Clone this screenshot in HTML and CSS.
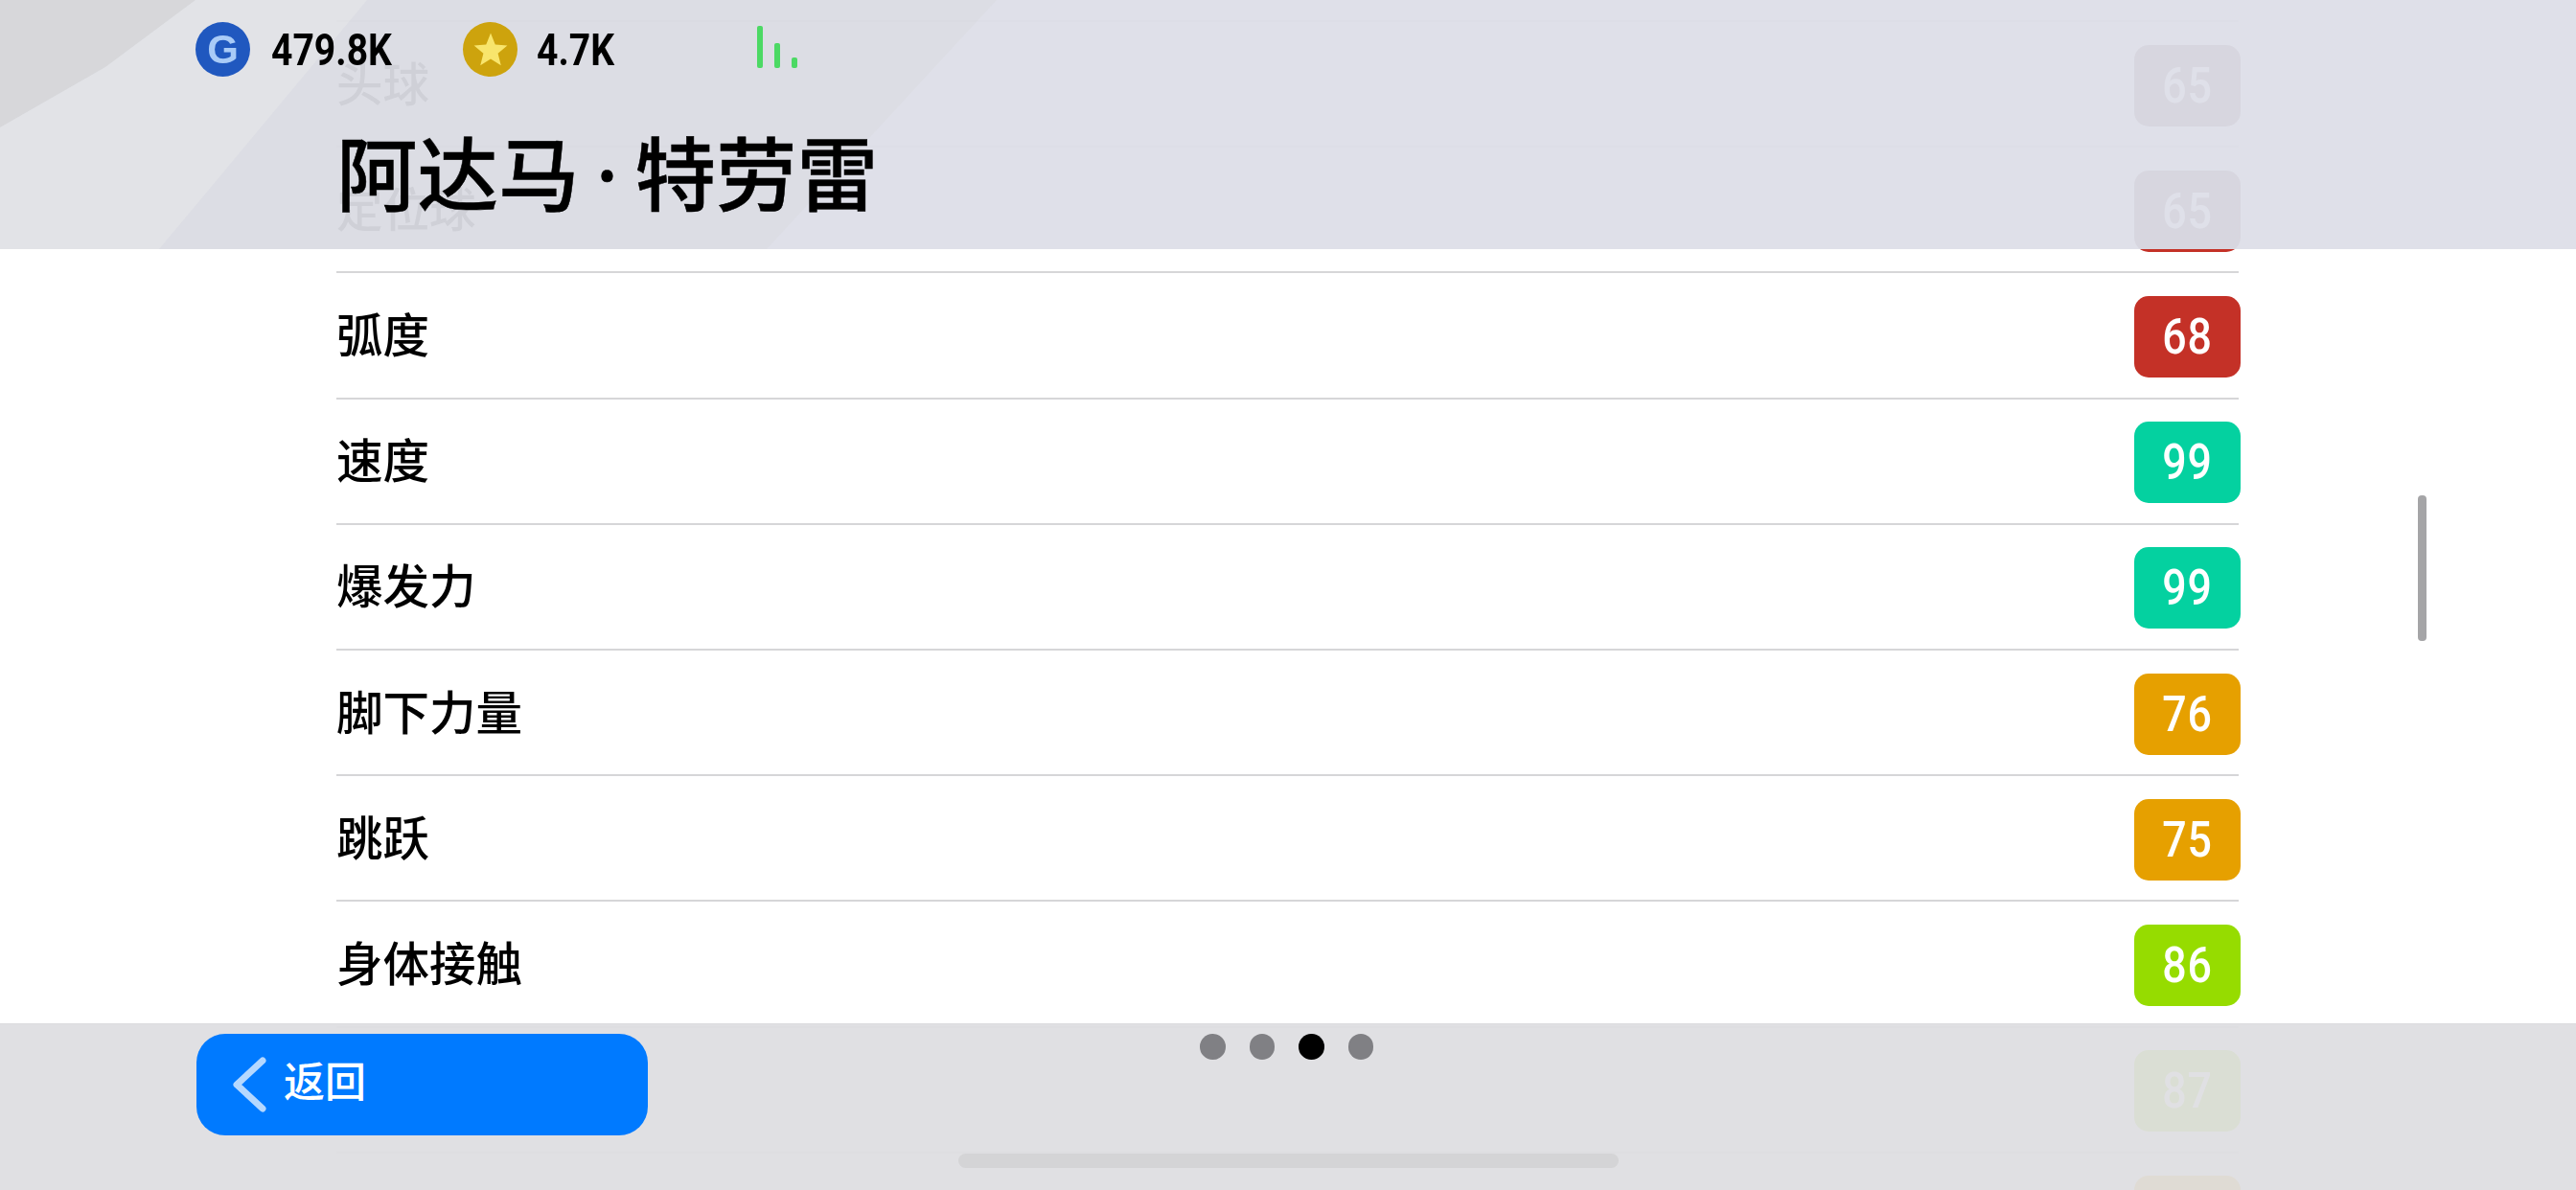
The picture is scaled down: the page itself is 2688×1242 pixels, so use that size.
FILE: index.html
```html
<!DOCTYPE html>
<html>
    <head>
        <title>球员能力</title>
        <link rel="stylesheet" href="styles.css">
    </head>
    <body>
        <div class="screen">
            <!-- scrolling list, header and footer sit on top of it -->
            <div class="list">
                <div class="row"><span class="label">头球</span><span class="score red"><span class="num">65</span></span></div>
                <div class="row"><span class="label">定位球</span><span class="score red"><span class="num">65</span></span></div>
                <div class="row"><span class="label">弧度</span><span class="score red"><span class="num">68</span></span></div>
                <div class="row"><span class="label">速度</span><span class="score teal"><span class="num">99</span></span></div>
                <div class="row"><span class="label">爆发力</span><span class="score teal"><span class="num">99</span></span></div>
                <div class="row"><span class="label">脚下力量</span><span class="score orange"><span class="num">76</span></span></div>
                <div class="row"><span class="label">跳跃</span><span class="score orange"><span class="num">75</span></span></div>
                <div class="row"><span class="label">身体接触</span><span class="score lime"><span class="num">86</span></span></div>
                <div class="row"><span class="label"></span><span class="score lime"><span class="num">87</span></span></div>
                <div class="row"><span class="label"></span><span class="score orange"></span></div>
            </div>

            <div class="scrollbar"></div>

            <div class="header">
                <svg class="header_bg" width="1100" height="260" viewBox="0 0 1100 260">
                    <polygon points="0,0 204,0 110,70 0,133" fill="#969664" fill-opacity="0.11"/>
                    <polygon points="204,0 383,0 166,260 0,260 0,133 110,70" fill="#ffffdc" fill-opacity="0.1"/>
                    <polygon points="383,0 1040,0 800,260 166,260" fill="#969664" fill-opacity="0.04"/>
                </svg>
                <div class="stats">
                    <span class="coin coin_g">G</span>
                    <span class="amount amount_g"><span class="num_wide">479.8K</span></span>
                    <span class="coin coin_star">
                        <svg width="38" height="38" viewBox="0 0 24 24"><polygon points="12,1 15,8.6 23,9.2 16.8,14.3 18.8,22.3 12,18 5.2,22.3 7.2,14.3 1,9.2 9,8.6" fill="#f8e56c"/></svg>
                    </span>
                    <span class="amount amount_star"><span class="num_wide">4.7K</span></span>
                    <span class="signal">
                        <i class="bar1"></i><i class="bar2"></i><i class="bar3"></i>
                    </span>
                </div>
                <h1 class="name">阿达马<span class="dot">·</span>特劳雷</h1>
            </div>

            <div class="footer">
                <button class="back">
                    <svg width="39" height="62" viewBox="0 0 39 62"><polyline points="33,6 6,31 33,56" fill="none" stroke="#b5d8ff" stroke-width="7" stroke-linecap="round" stroke-linejoin="round"/></svg>
                    <span>返回</span>
                </button>
                <div class="pager">
                    <i></i><i></i><i class="on"></i><i></i>
                </div>
            </div>

            <div class="home_bar"></div>
        </div>
    </body>
</html>
```

FILE: styles.css
```css
*{
    box-sizing: border-box;
}
body{
    margin: 0;
    font-family: "Noto Sans CJK SC", "Noto Sans", sans-serif;
    color: #000;
}
.screen{
    position: relative;
    width: 2688px;
    height: 1242px;
    overflow: hidden;
    background: #fff;
}

/* list */
.list{
    padding: 21px 350px 0 351px;
}
.row{
    display: flex;
    justify-content: space-between;
    align-items: center;
    height: 131.2px;
    font-size: 48.5px;
    font-weight: 500;
    border-top: 2px solid #d6d6d8;
    margin-right: 2px;
}
.label{
    margin-bottom: 6px;
}
.score{
    width: 111px;
    height: 85px;
    margin: 3px -2px 0 0;
    border-radius: 15px;
    color: #fff;
    font-family: "Roboto", sans-serif;
    font-size: 52px;
    font-weight: 500;
    line-height: 85px;
    text-align: center;
}
.num{
    display: inline-block;
    letter-spacing: 1px;
    transform: scaleX(0.86);
}
.red{ background: #c43127; }
.teal{ background: #04d1a0; }
.orange{ background: #e6a000; }
.lime{ background: #96dc00; }

.scrollbar{
    position: absolute;
    left: 2523px;
    top: 517px;
    width: 9px;
    height: 152px;
    border-radius: 4px;
    background: #a5a5a7;
}

/* header */
.header{
    position: absolute;
    top: 0;
    left: 0;
    width: 100%;
    height: 260px;
    padding: 23px 0 0 204px;
    background: rgba(221, 222, 232, 0.95);
    backdrop-filter: grayscale(0.8);
}
.header_bg{
    position: absolute;
    left: 0;
    top: 0;
}
.stats{
    position: relative;
    display: flex;
    align-items: center;
    height: 57px;
}
.coin{
    display: flex;
    align-items: center;
    justify-content: center;
    width: 57px;
    height: 57px;
    border-radius: 50%;
}
.coin_g{
    background: #2058bf;
    color: #a9cbf7;
    font-family: "Liberation Sans", sans-serif;
    font-size: 42px;
    font-weight: 700;
}
.coin_star{
    background: #cda30d;
}
.amount{
    font-family: "Roboto", sans-serif;
    font-size: 46px;
    font-weight: 700;
}
.num_wide{
    display: inline-block;
    transform: scaleX(0.85);
    transform-origin: left center;
}
.amount_g{
    width: 222px;
    padding-left: 22px;
}
.amount_star{
    width: 250px;
    padding-left: 20px;
}
.signal{
    display: flex;
    align-items: flex-end;
    gap: 12px;
    height: 44px;
    margin-bottom: 5px;
}
.signal i{
    display: block;
    width: 6px;
    border-radius: 2px;
    background: #4cd964;
}
.bar1{ height: 44px; }
.bar2{ height: 26px; }
.bar3{ height: 11px; }
.name{
    position: relative;
    margin: 47px 0 0 147px;
    font-size: 84.5px;
    font-weight: 500;
    line-height: 100px;
    letter-spacing: 0;
    -webkit-text-stroke: 0.5px #000;
}
.dot{
    display: inline-block;
    width: 58px;
    font-family: "Noto Sans", sans-serif;
    text-align: center;
}

/* footer */
.footer{
    position: absolute;
    left: 0;
    top: 1068px;
    width: 100%;
    height: 174px;
    padding: 10px 0 0 205px;
    background: rgba(222, 222, 225, 0.94);
    border-top: 1px solid #dcdcde;
}
.back{
    display: flex;
    align-items: center;
    gap: 16px;
    width: 471px;
    height: 106px;
    padding: 0 0 12px 36px;
    border: none;
    border-radius: 30px;
    background: #007aff;
    color: #fff;
    font-family: inherit;
    font-size: 43px;
    font-weight: 500;
}
.back svg{
    margin-top: 12px;
}
.pager{
    position: absolute;
    left: 1252px;
    top: 10px;
    display: flex;
    gap: 25px;
}
.pager i{
    display: block;
    width: 26.5px;
    height: 26.5px;
    border-radius: 50%;
    background: #808084;
}
.pager .on{
    background: #000;
}
.home_bar{
    position: absolute;
    left: 1000px;
    top: 1204px;
    width: 689px;
    height: 15px;
    border-radius: 8px;
    background: #d4d4d6;
}
```
